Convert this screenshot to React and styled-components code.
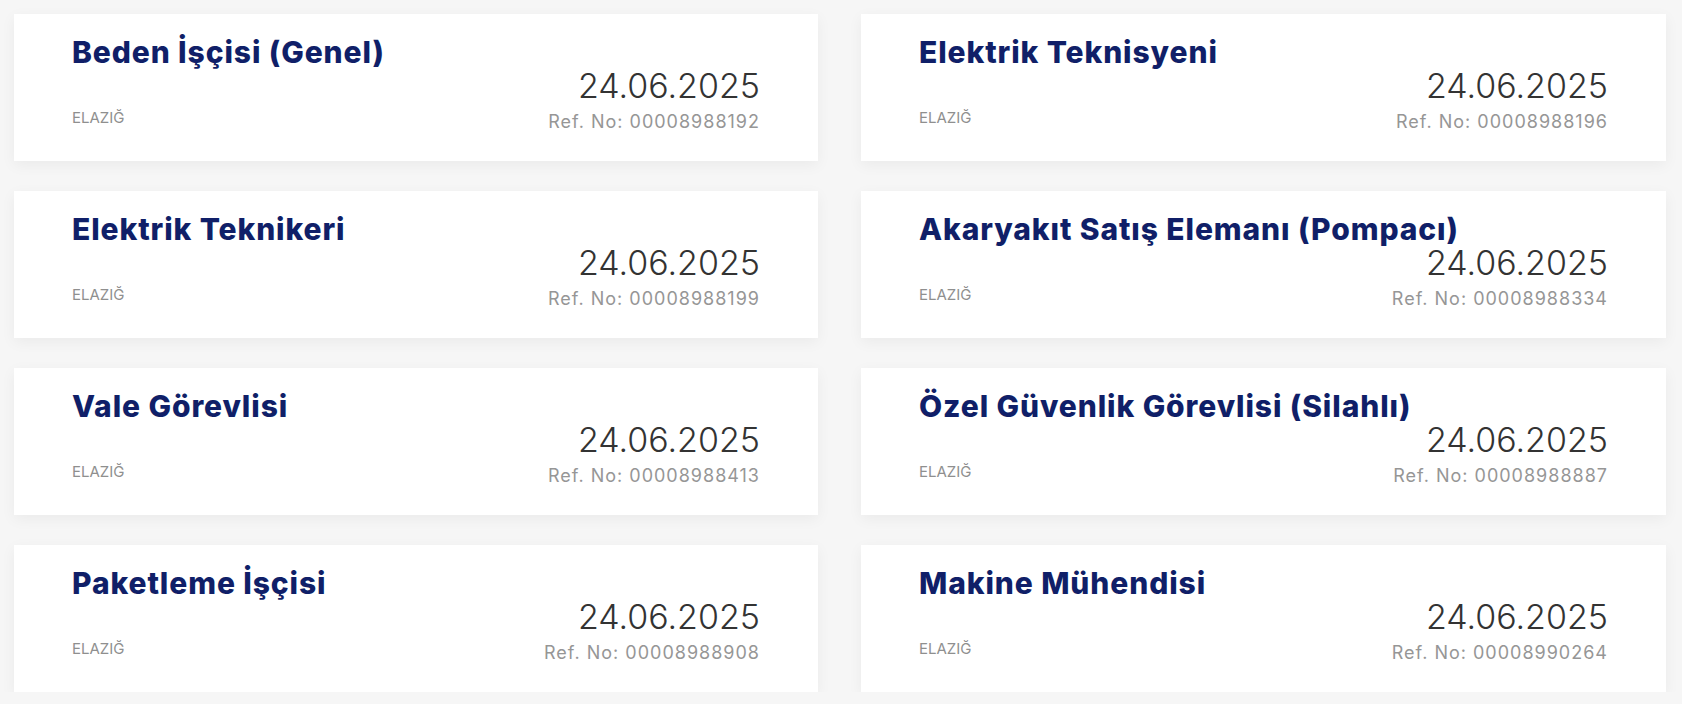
import React from 'react'
import styled, { createGlobalStyle } from 'styled-components'

const GlobalStyle = createGlobalStyle`
  html, body {
    margin: 0;
    padding: 0;
    background: #f6f6f6;
    font-family: 'Inter', 'Noto Sans', sans-serif;
  }
`

const jobs = [
  { title: 'Beden İşçisi (Genel)', ref: '00008988192' },
  { title: 'Elektrik Teknisyeni', ref: '00008988196' },
  { title: 'Elektrik Teknikeri', ref: '00008988199' },
  { title: 'Akaryakıt Satış Elemanı (Pompacı)', ref: '00008988334' },
  { title: 'Vale Görevlisi', ref: '00008988413' },
  { title: 'Özel Güvenlik Görevlisi (Silahlı)', ref: '00008988887' },
  { title: 'Paketleme İşçisi', ref: '00008988908' },
  { title: 'Makine Mühendisi', ref: '00008990264' },
]

export default function App() {
  return (
    <>
      <GlobalStyle />
      <Grid>
        {jobs.map((job) => (
          <Card key={job.ref} href="#">
            <Title>{job.title}</Title>
            <Bottom>
              <City>ELAZIĞ</City>
              <Meta>
                <DateText>24.06.2025</DateText>
                <RefNo>Ref. No: {job.ref}</RefNo>
              </Meta>
            </Bottom>
          </Card>
        ))}
      </Grid>
    </>
  )
}

const Grid = styled.div`
  display: grid;
  grid-template-columns: 804px 805px;
  column-gap: 43px;
  row-gap: 30px;
  padding: 14px 16px 0 14px;
`

const Card = styled.a`
  display: flex;
  flex-direction: column;
  height: 147px;
  box-sizing: border-box;
  padding: 21px 58px 0 58px;
  background: #fff;
  box-shadow: 0 4px 14px rgba(0, 0, 0, 0.05);
  text-decoration: none;
`

const Title = styled.h3`
  margin: 0;
  font-size: 30px;
  line-height: 35px;
  font-weight: 800;
  color: #101f68;
  letter-spacing: 0.9px;
`

const Bottom = styled.div`
  display: flex;
  justify-content: space-between;
  align-items: flex-end;
`

const City = styled.span`
  font-size: 15px;
  color: #8f8f8f;
  margin-bottom: 6px;
`

const Meta = styled.div`
  display: flex;
  flex-direction: column;
  align-items: flex-end;
`

const DateText = styled.span`
  font-size: 34px;
  line-height: 40px;
  font-weight: 300;
  color: #333;
  margin-top: -4px;
`

const RefNo = styled.span`
  font-size: 18px;
  line-height: 22px;
  color: #969696;
  letter-spacing: 1px;
  margin-top: 5px;
`
